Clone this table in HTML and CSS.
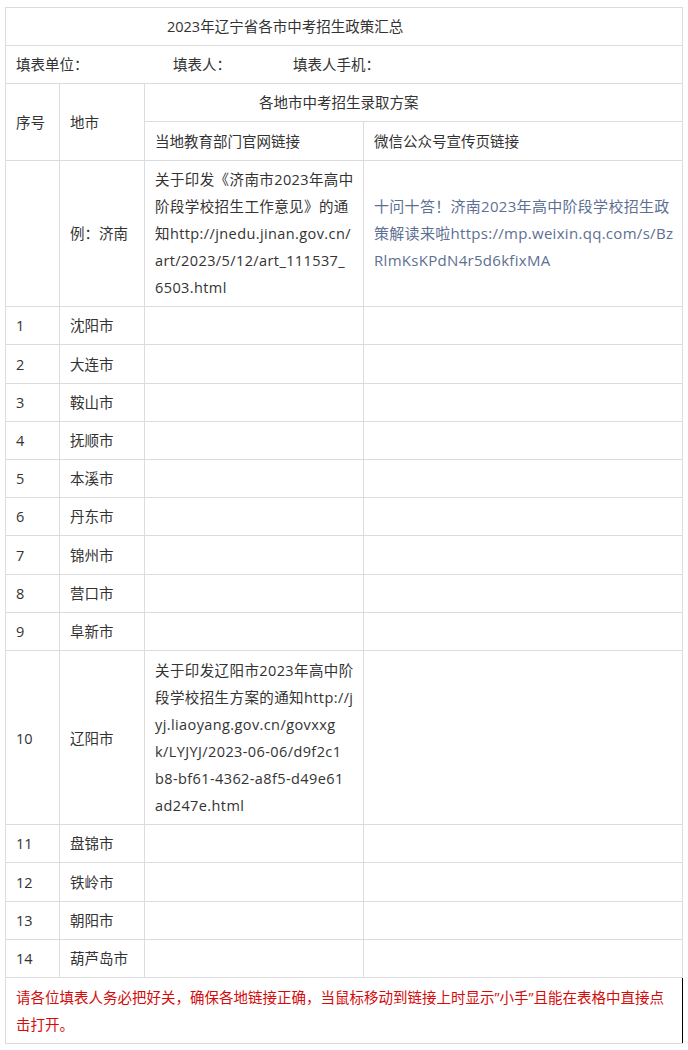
FILE: index.html
```html
<!DOCTYPE html>
<html lang="zh-CN">
<head>
<meta charset="utf-8">
<title>2023年辽宁省各市中考招生政策汇总</title>
<link rel="stylesheet" href="styles.css">
</head>
<body>
<div class="page">
<table class="sheet">
  <colgroup>
    <col class="c-no"><col class="c-city"><col class="c-edu"><col class="c-wx">
  </colgroup>
  <tbody>
    <tr><td colspan="4" class="title">2023年辽宁省各市中考招生政策汇总</td></tr>
    <tr><td colspan="4" class="form"><span class="f1">填表单位：</span><span class="f2">填表人：</span><span>填表人手机：</span></td></tr>
    <tr>
      <td rowspan="2">序号</td>
      <td rowspan="2">地市</td>
      <td colspan="2" class="group">各地市中考招生录取方案</td>
    </tr>
    <tr class="sub"><td>当地教育部门官网链接</td><td>微信公众号宣传页链接</td></tr>
    <tr>
      <td></td>
      <td>例：济南</td>
      <td class="doc">关于印发《济南市2023年高中<br>阶段学校招生工作意见》的通<br>知http://jnedu.jinan.gov.cn/<br>art/2023/5/12/art_111537_<br>6503.html</td>
      <td class="wx">十问十答！济南2023年高中阶段学校招生政<br>策解读来啦https://mp.weixin.qq.com/s/Bz<br>RlmKsKPdN4r5d6kfixMA</td>
    </tr>
    <tr><td>1</td><td>沈阳市</td><td></td><td></td></tr>
    <tr class="tall"><td>2</td><td>大连市</td><td></td><td></td></tr>
    <tr><td>3</td><td>鞍山市</td><td></td><td></td></tr>
    <tr><td>4</td><td>抚顺市</td><td></td><td></td></tr>
    <tr><td>5</td><td>本溪市</td><td></td><td></td></tr>
    <tr><td>6</td><td>丹东市</td><td></td><td></td></tr>
    <tr class="tall"><td>7</td><td>锦州市</td><td></td><td></td></tr>
    <tr><td>8</td><td>营口市</td><td></td><td></td></tr>
    <tr><td>9</td><td>阜新市</td><td></td><td></td></tr>
    <tr class="six">
      <td>10</td>
      <td>辽阳市</td>
      <td class="doc">关于印发辽阳市2023年高中阶<br>段学校招生方案的通知http://j<br>yj.liaoyang.gov.cn/govxxg<br>k/LYJYJ/2023-06-06/d9f2c1<br>b8-bf61-4362-a8f5-d49e61<br>ad247e.html</td>
      <td></td>
    </tr>
    <tr><td>11</td><td>盘锦市</td><td></td><td></td></tr>
    <tr class="tall"><td>12</td><td>铁岭市</td><td></td><td></td></tr>
    <tr><td>13</td><td>朝阳市</td><td></td><td></td></tr>
    <tr><td>14</td><td>葫芦岛市</td><td></td><td></td></tr>
    <tr><td colspan="4" class="note">请各位填表人务必把好关，确保各地链接正确，当鼠标移动到链接上时显示”小手”且能在表格中直接点击打开。</td></tr>
  </tbody>
</table>
</div>
</body>
</html>
```
FILE: styles.css
```css
html, body {
  margin: 0;
  padding: 0;
  background: #ffffff;
}

.page {
  padding: 7px 0 0 5px;
}

.sheet {
  border-collapse: collapse;
  table-layout: fixed;
  width: 677px;
  font-family: "Open Sans", "Noto Sans CJK SC", sans-serif;
  font-size: 14.5px;
  line-height: 27px;
  color: #333333;
}

.c-no { width: 54px; }
.c-city { width: 85px; }
.c-edu { width: 219px; }
.c-wx { width: 319px; }

.sheet td {
  border: 1px solid #dcdcdc;
  padding: 5px 10px;
  vertical-align: middle;
  white-space: nowrap;
  overflow: hidden;
}

.sheet tr { height: 38px; }
.sheet tr.tall, .sheet tr.sub { height: 39px; }
.sheet tr.six td { padding-top: 6px; }

.sheet td.title { padding-left: 161px; }
.sheet td.group { padding-left: 114px; }

.f1 { display: inline-block; width: 157px; }
.f2 { display: inline-block; width: 120px; }

.sheet td.doc { letter-spacing: 0.4px; }

.sheet td.wx {
  color: #5d7092;
  font-size: 15px;
  letter-spacing: 0.3px;
}

.sheet td.note {
  color: #d40b0b;
  white-space: normal;
  padding: 6px 10px 5px;
  border-right: 1px solid #000000;
}
```
